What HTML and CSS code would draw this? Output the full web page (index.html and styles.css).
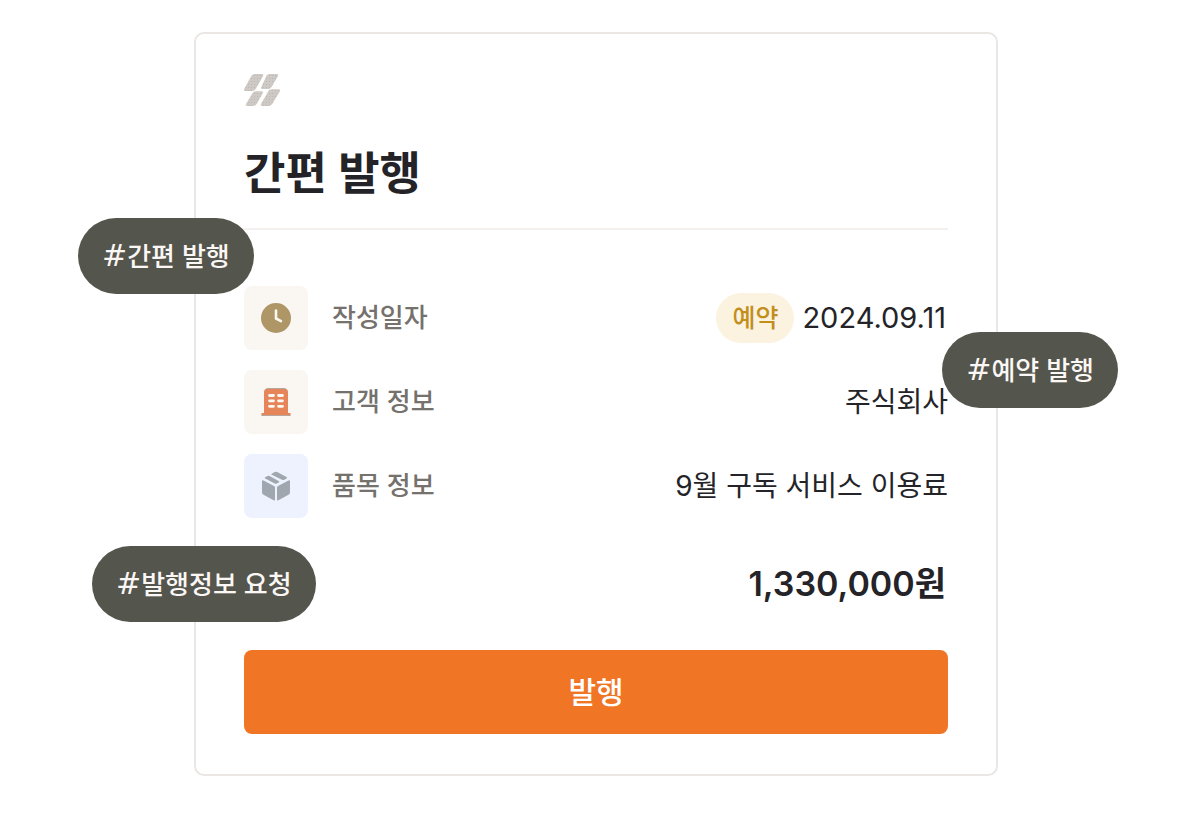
FILE: index.html
```html
<!DOCTYPE html>
<html lang="ko">
<head>
<meta charset="utf-8">
<meta name="viewport" content="width=device-width, initial-scale=1">
<title>간편 발행</title>
<link rel="stylesheet" href="styles.css">
</head>
<body>
<main class="stage">
  <section class="card">
    <svg class="logo" viewBox="0 0 36 32" aria-hidden="true">
      <defs>
        <pattern id="grain" width="3" height="3" patternUnits="userSpaceOnUse">
          <rect width="3" height="3" fill="#cec9c4"/>
          <rect x="1" y="1" width="1" height="1" fill="#bcb8b4"/>
        </pattern>
      </defs>
      <g fill="url(#grain)">
        <path d="M10.500 0H17.500Q20 0 18.900 2.300L12 14.500Q10.500 17 8 17H1.500Q-.8 17 .3 14.800L7.500 1.800Q8.500 0 10.500 0Z"/>
        <path d="M25.500 0H32.500Q35 0 33.900 2.300L27.500 13Q26.300 15 24.300 15H18.500Q16.300 15 17.400 12.800L22.500 1.800Q23.500 0 25.500 0Z"/>
        <path d="M11.500 17.200H17.500Q19.700 17.200 18.600 19.400L12.800 29.800Q11.500 32 9 32H3.500Q1 32 2.100 29.700L8.500 19.200Q9.500 17.200 11.500 17.200Z"/>
        <path d="M27.500 15.200H34.500Q37 15.200 35.800 17.500L28.300 29.800Q27 32 24.500 32H18.500Q16 32 17.100 29.700L24.500 17Q25.500 15.200 27.500 15.200Z"/>
      </g>
    </svg>
    <h1 class="title">간편 발행</h1>

    <dl class="details">
      <div class="row">
        <dt class="label">
          <span class="tile">
            <svg class="icon" viewBox="0 0 32 32" aria-hidden="true">
              <circle cx="16" cy="16" r="15" fill="#ae9666"/>
              <path d="M16 8.500V16.500L21 19.200" fill="none" stroke="#fbf7f2" stroke-width="2.600" stroke-linecap="round" stroke-linejoin="round"/>
            </svg>
          </span>
          작성일자
        </dt>
        <dd class="value"><span class="badge">예약</span><span class="date">2024.09.11</span></dd>
      </div>
      <div class="row">
        <dt class="label">
          <span class="tile">
            <svg class="icon" viewBox="0 0 32 32" aria-hidden="true">
              <path d="M4 6Q4 2.500 8 2.500H24Q28 2.500 28 6V27H30.500V29.500H1.500V27H4Z" fill="#e6855a"/>
              <path d="M5 4Q6 2.500 8 2.500H24Q26 2.500 27 4M1.500 29.500H30.500" fill="none" stroke="#b5a79d"/>
              <path d="M9.500 9.500H13.500M18.500 9.500H22.500M9.500 14.800H13.500M18.500 14.800H22.500M9.500 20.300H13.500M18.500 20.300H22.500" stroke="#fbf7f2" stroke-width="2.800" stroke-linecap="round"/>
            </svg>
          </span>
          고객 정보
        </dt>
        <dd class="value">주식회사</dd>
      </div>
      <div class="row">
        <dt class="label">
          <span class="tile tile-blue">
            <svg class="icon" viewBox="0 0 32 32" aria-hidden="true" fill="#a0a7ae">
              <path d="M2 11.500Q2 9.800 3.500 10.600L14 16Q15 16.500 15 17.600V29.500Q15 31 13.600 30.200L3.500 24.800Q2 24 2 22.300Z"/>
              <path d="M30 11.500Q30 9.800 28.500 10.600L18 16Q17 16.500 17 17.600V29.500Q17 31 18.400 30.200L28.500 24.800Q30 24 30 22.300Z"/>
              <path d="M5.200 7.200L7.500 6Q8.500 5.500 9.500 6L18.600 10.900Q20 11.700 18.700 12.500L16.800 13.500Q15.800 14 14.800 13.500L5.200 8.500Q4 7.800 5.200 7.200Z"/>
              <path d="M11.700 3.700L14.800 2Q16 1.400 17.200 2L26.500 7Q27.800 7.800 26.500 8.600L24.400 9.700Q23.200 10.300 22 9.700L11.700 4.800Q10.600 4.300 11.700 3.700Z"/>
            </svg>
          </span>
          품목 정보
        </dt>
        <dd class="value">9월 구독 서비스 이용료</dd>
      </div>
    </dl>

    <p class="amount">1,330,000원</p>
    <button class="submit" type="button">발행</button>

    <span class="tag tag-simple"><span class="hash">#</span>간편 발행</span>
    <span class="tag tag-reserve"><span class="hash">#</span>예약 발행</span>
    <span class="tag tag-request"><span class="hash">#</span>발행정보 요청</span>
  </section>
</main>
</body>
</html>
```
FILE: styles.css
```css
* {
  box-sizing: border-box;
}

body {
  margin: 0;
  background: #fff;
  color: #242428;
  font-family: Inter, "Noto Sans CJK KR", sans-serif;
}

.stage {
  padding: 32px 120px;
}

.card {
  position: relative;
  display: flex;
  flex-direction: column;
  max-width: 804px;
  margin: 0 auto;
  padding: 40px 48px;
  border: 2px solid #e9e6e4;
  border-radius: 10px;
  background: #fff;
}

.logo {
  width: 36px;
  height: 32px;
  margin-bottom: 38px;
}

.title {
  margin: 0;
  padding-bottom: 24px;
  border-bottom: 2px solid #f3f0ee;
  font-size: 45px;
  font-weight: 600;
  line-height: 60px;
}

.details {
  display: flex;
  flex-direction: column;
  gap: 20px;
  margin: 56px 0 40px;
}

.row {
  display: flex;
  align-items: center;
  justify-content: space-between;
}

.label {
  display: flex;
  align-items: center;
  gap: 24px;
  color: #75716d;
  font-size: 26px;
  font-weight: 500;
  line-height: 36px;
}

.tile {
  display: grid;
  place-items: center;
  width: 64px;
  height: 64px;
  border-radius: 8px;
  background: #faf6f2;
}

.tile-blue {
  background: #edf2fe;
}

.icon {
  width: 32px;
  height: 32px;
}

.value {
  display: flex;
  align-items: center;
  gap: 8px;
  margin: 0;
  font-size: 28px;
  line-height: 40px;
}

.badge {
  padding: 5px 16px;
  border-radius: 25px;
  background: #fbf2e0;
  color: #c28e1c;
  font-size: 25px;
  font-weight: 500;
}

.date {
  padding-right: 2px;
  font-size: 29px;
}

.amount {
  margin: 0 0 40px;
  padding-right: 2px;
  font-size: 34px;
  font-weight: 600;
  line-height: 52px;
  text-align: right;
}

.submit {
  padding: 20px;
  border: 0;
  border-radius: 8px;
  background: #f07525;
  color: #fff;
  font: inherit;
  font-size: 30px;
  font-weight: 500;
  line-height: 44px;
}

.tag {
  position: absolute;
  padding: 19px 24px 17px;
  border-radius: 38px;
  background: #54554d;
  color: #fbf7f5;
  font-size: 26px;
  font-weight: 500;
  line-height: 40px;
  white-space: nowrap;
}

.hash {
  font-family: "DejaVu Sans", sans-serif;
  font-size: 30px;
  font-weight: 400;
  line-height: 1;
}

.tag-simple {
  top: 184px;
  left: -118px;
}

.tag-reserve {
  top: 298px;
  right: -122px;
}

.tag-request {
  top: 512px;
  left: -104px;
}
```
